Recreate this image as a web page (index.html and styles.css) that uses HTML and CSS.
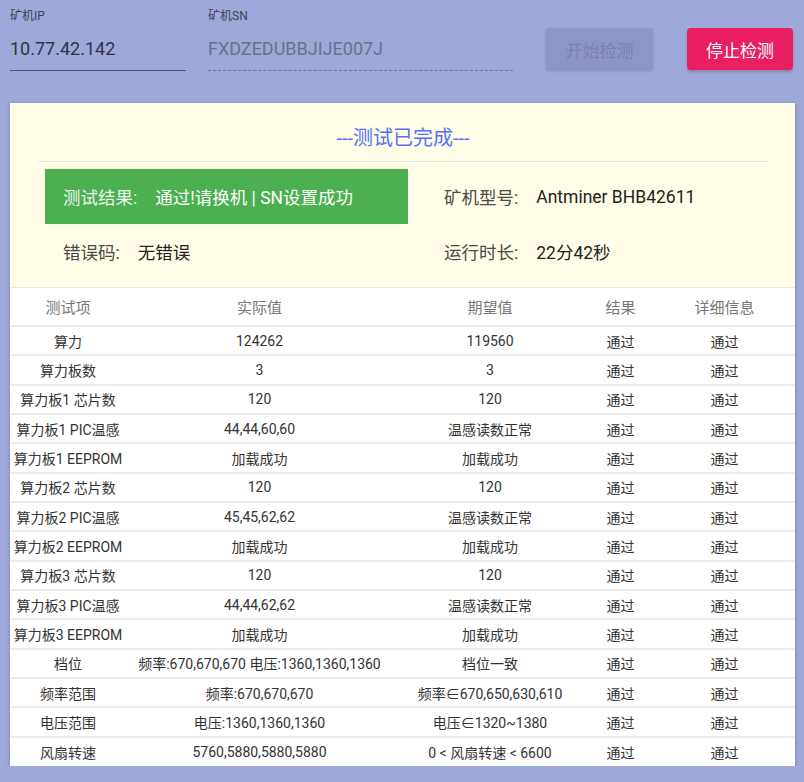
FILE: index.html
```html
<!DOCTYPE html>
<html lang="zh">
<head>
<meta charset="utf-8">
<title>矿机检测</title>
<link rel="stylesheet" href="styles.css">
</head>
<body>
<div class="page">
  <div class="topbar">
    <div class="field field-ip">
      <div class="field-label">矿机IP</div>
      <div class="field-value">10.77.42.142</div>
    </div>
    <div class="field field-sn">
      <div class="field-label">矿机SN</div>
      <div class="field-value disabled">FXDZEDUBBJIJE007J</div>
    </div>
    <button class="btn btn-start" disabled>开始检测</button>
    <button class="btn btn-stop">停止检测</button>
  </div>

  <div class="card">
    <div class="card-head">
      <div class="title">---测试已完成---</div>
      <div class="summary">
        <div class="cell result"><span class="lbl">测试结果:</span><span class="val">通过!请换机 | SN设置成功</span></div>
        <div class="cell"><span class="lbl">矿机型号:</span><span class="val">Antminer BHB42611</span></div>
        <div class="cell"><span class="lbl">错误码:</span><span class="val">无错误</span></div>
        <div class="cell"><span class="lbl">运行时长:</span><span class="val">22分42秒</span></div>
      </div>
    </div>
    <table class="results">
      <colgroup>
        <col class="c1"><col class="c2"><col class="c3"><col class="c4"><col class="c5">
      </colgroup>
      <thead>
        <tr><th>测试项</th><th>实际值</th><th>期望值</th><th>结果</th><th>详细信息</th></tr>
      </thead>
      <tbody>
        <tr><td>算力</td><td>124262</td><td>119560</td><td>通过</td><td>通过</td></tr>
        <tr><td>算力板数</td><td>3</td><td>3</td><td>通过</td><td>通过</td></tr>
        <tr><td>算力板1 芯片数</td><td>120</td><td>120</td><td>通过</td><td>通过</td></tr>
        <tr><td>算力板1 PIC温感</td><td>44,44,60,60</td><td>温感读数正常</td><td>通过</td><td>通过</td></tr>
        <tr><td>算力板1 EEPROM</td><td>加载成功</td><td>加载成功</td><td>通过</td><td>通过</td></tr>
        <tr><td>算力板2 芯片数</td><td>120</td><td>120</td><td>通过</td><td>通过</td></tr>
        <tr><td>算力板2 PIC温感</td><td>45,45,62,62</td><td>温感读数正常</td><td>通过</td><td>通过</td></tr>
        <tr><td>算力板2 EEPROM</td><td>加载成功</td><td>加载成功</td><td>通过</td><td>通过</td></tr>
        <tr><td>算力板3 芯片数</td><td>120</td><td>120</td><td>通过</td><td>通过</td></tr>
        <tr><td>算力板3 PIC温感</td><td>44,44,62,62</td><td>温感读数正常</td><td>通过</td><td>通过</td></tr>
        <tr><td>算力板3 EEPROM</td><td>加载成功</td><td>加载成功</td><td>通过</td><td>通过</td></tr>
        <tr><td>档位</td><td>频率:670,670,670 电压:1360,1360,1360</td><td>档位一致</td><td>通过</td><td>通过</td></tr>
        <tr><td>频率范围</td><td>频率:670,670,670</td><td>频率∈670,650,630,610</td><td>通过</td><td>通过</td></tr>
        <tr><td>电压范围</td><td>电压:1360,1360,1360</td><td>电压∈1320~1380</td><td>通过</td><td>通过</td></tr>
        <tr><td>风扇转速</td><td>5760,5880,5880,5880</td><td>0 &lt; 风扇转速 &lt; 6600</td><td>通过</td><td>通过</td></tr>
      </tbody>
    </table>
  </div>
</div>
</body>
</html>
```

FILE: styles.css
```css
html, body {
  margin: 0;
  padding: 0;
  background: #9fa8da;
  font-family: "Roboto", "Noto Sans CJK SC", sans-serif;
  color: #333;
}

.page {
  padding: 8px 9px 0 10px;
}

.topbar {
  display: flex;
  align-items: flex-end;
}

.field-label {
  font-size: 12px;
  line-height: 16px;
  color: #3f4254;
}

.field-value {
  font-size: 18px;
  line-height: 24px;
  padding: 13px 0 9px;
  color: #2f3245;
  border-bottom: 1px solid #505570;
}

.field-value.disabled {
  color: #6b7092;
  border-bottom: 1px dashed #6b7092;
}

.field-ip {
  width: 176px;
}

.field-sn {
  width: 305px;
  margin-left: 22px;
}

.btn {
  font-family: "Roboto", "Noto Sans CJK SC", sans-serif;
  font-size: 17px;
  height: 42px;
  border: none;
  border-radius: 4px;
  margin-bottom: 1px;
  padding: 0;
}

.btn-start {
  width: 107px;
  margin-left: 33px;
  background: #8d96c6;
  color: #7a81ad;
  box-shadow: 0 1px 3px rgba(0, 0, 0, 0.18);
}

.btn-stop {
  width: 106px;
  margin-left: 34px;
  background: #e91e63;
  color: #fff;
  box-shadow: 0 2px 3px rgba(0, 0, 0, 0.2);
}

.card {
  margin-top: 32px;
  width: 785px;
  background: #fff;
  box-shadow: 0 1px 4px rgba(0, 0, 0, 0.25);
}

.card-head {
  background: #fffde7;
  padding: 0 27px 8px 28px;
  border-bottom: 1px solid #ece9d6;
}

.title {
  text-align: center;
  font-size: 20px;
  line-height: 26px;
  padding: 22px 0 10px;
  color: #5472f5;
  border-bottom: 1px solid #ebe8d6;
}

.summary {
  display: grid;
  grid-template-columns: 363px 1fr;
  grid-auto-rows: 55px;
  column-gap: 18px;
  padding: 0 7px;
  margin-top: 7px;
}

.cell {
  display: flex;
  align-items: center;
  padding-left: 18px;
  font-size: 17.5px;
  color: #222;
}

.cell .lbl {
  color: #4a4a4a;
  margin-right: 18px;
}

.cell.result {
  background: #4caf50;
  color: #fff;
}

.cell.result .lbl {
  color: #eaf6ea;
}

.results {
  width: 785px;
  border-collapse: collapse;
  table-layout: fixed;
}

.c1 { width: 116px; }
.c2 { width: 267px; }
.c3 { width: 194px; }
.c4 { width: 67px; }
.c5 { width: 141px; }

.results th {
  font-size: 15px;
  font-weight: normal;
  color: #777;
  height: 37px;
  padding: 0;
  border-bottom: 2px solid #ececec;
}

.results td {
  font-size: 14px;
  color: #333;
  text-align: center;
  height: 27.33px;
  padding: 0;
  white-space: nowrap;
  border-bottom: 2px solid #ececec;
}

.results tbody tr:last-child td {
  border-bottom: none;
  height: 28px;
}
```
